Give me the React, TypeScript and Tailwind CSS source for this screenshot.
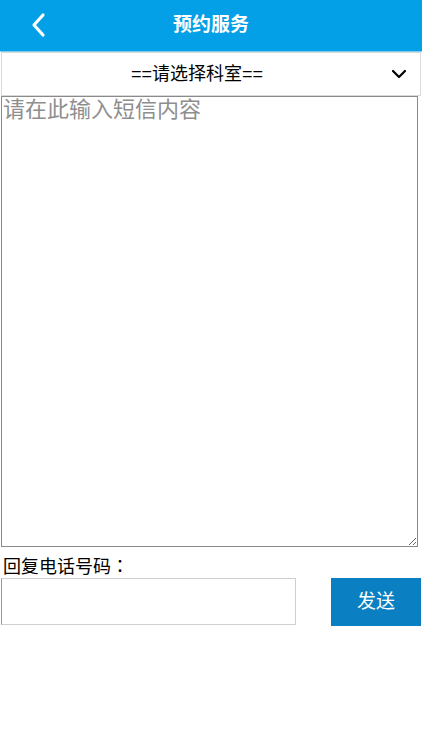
import React, { useState } from 'react';

const font = { fontFamily: '"Liberation Sans", "Noto Sans CJK SC", sans-serif' };
const labelFont = { fontFamily: '"Noto Sans CJK TC", sans-serif' };

export default function App() {
  const [dept, setDept] = useState('');
  const [msg, setMsg] = useState('');
  const [phone, setPhone] = useState('');

  return (
    <div className="w-[422px] h-[750px] bg-white" style={font}>
      <div className="h-[52px] bg-[#03a0e7] flex items-center relative border-b border-[#7fcdf2]">
        <button className="absolute left-[30px] top-[12px] text-white">
          <svg width="18" height="26" viewBox="0 0 18 26" fill="none">
            <path d="M13 3 L4 13 L13 23" stroke="white" strokeWidth="3.2" strokeLinecap="round" strokeLinejoin="round" />
          </svg>
        </button>
        <div className="flex-1 text-center text-white text-[19px] font-bold">预约服务</div>
      </div>

      <div className="relative h-[44px] mx-[1px] border border-[#d9d9d9]">
        <select
          value={dept}
          onChange={(e) => setDept(e.target.value)}
          className="w-full h-full appearance-none bg-white text-center text-[18px] text-black outline-none pr-[28px]"
          style={{ textAlignLast: 'center' }}
        >
          <option value="">==请选择科室==</option>
        </select>
        <svg className="absolute right-[13px] top-[15px] pointer-events-none" width="16" height="12" viewBox="0 0 16 12" fill="none">
          <path d="M2 3 L8 9 L14 3" stroke="black" strokeWidth="2.2" strokeLinecap="round" strokeLinejoin="round" />
        </svg>
      </div>

      <textarea
        value={msg}
        onChange={(e) => setMsg(e.target.value)}
        placeholder="请在此输入短信内容"
        className="block mx-[1px] w-[417px] h-[451px] border border-[#8a8a8a] text-[22px] leading-[26px] text-black placeholder:text-[#8e8e8e] outline-none resize-y px-[1px] pt-0"
      />

      <div className="mt-[6px] pl-[3px] text-[18px] leading-[24px] text-black" style={labelFont}>回复电话号码：</div>

      <div className="flex items-start justify-between pl-[1px] pr-[1px] mt-[1px]">
        <input
          value={phone}
          onChange={(e) => setPhone(e.target.value)}
          className="w-[295px] h-[47px] border border-[#cfcfcf] border-l-[#9a9a9a] outline-none px-2 text-[17px]"
        />
        <button className="w-[90px] h-[48px] bg-[#0a7fc1] text-white text-[19px]">发送</button>
      </div>
    </div>
  );
}
